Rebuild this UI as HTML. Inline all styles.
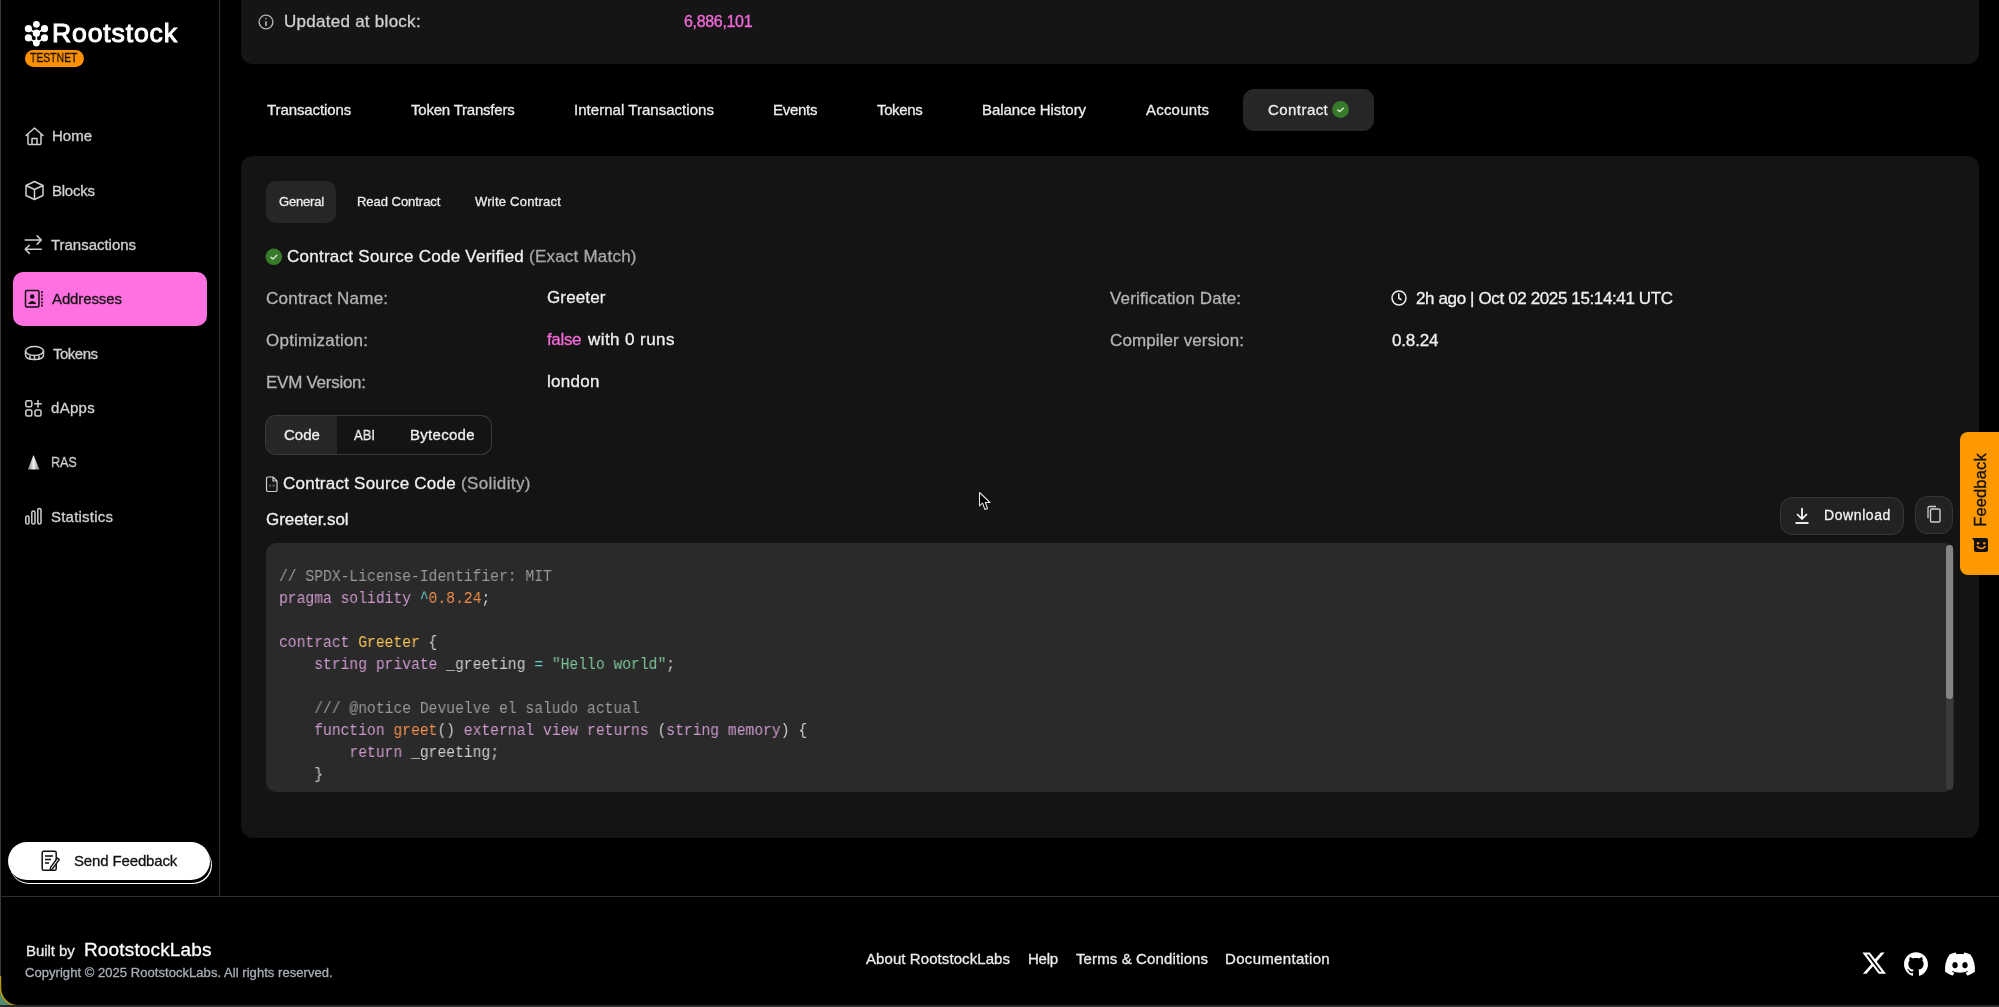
<!DOCTYPE html>
<html><head><meta charset="utf-8"><title>Rootstock Explorer</title>
<style>
html,body{margin:0;padding:0;}
body{width:1999px;height:1007px;overflow:hidden;position:relative;background:#000;font-family:"Liberation Sans",sans-serif;}
.t{position:absolute;white-space:pre;font-family:"Liberation Sans",sans-serif;-webkit-text-stroke:0.3px currentColor;will-change:transform;}
.r{position:absolute;}
.s{position:absolute;overflow:visible;}
pre.code{position:absolute;margin:0;will-change:transform;font-family:"Liberation Mono",monospace;color:#ccc;white-space:pre;}
</style></head><body>
<div class="r" style="left:0px;top:0px;width:1999px;height:1007px;background:#000;border-radius:0px;"></div>
<div class="r" style="left:0px;top:0px;width:1px;height:1007px;background:#3a3a3a;border-radius:0px;"></div>
<div class="r" style="left:219px;top:0px;width:1px;height:897px;background:#2e2e2e;border-radius:0px;"></div>
<div class="r" style="left:0px;top:896px;width:1999px;height:1px;background:#2e2e2e;border-radius:0px;"></div>
<div class="r" style="left:0px;top:1005px;width:1999px;height:2px;background:#2a2a2a;border-radius:0px;"></div>
<svg class="s" style="left:20px;top:16px;" width="32" height="34" viewBox="0 0 32 34"><line x1="8.399999999999999" y1="12.7" x2="16.4" y2="17.200000000000003" stroke="#fff" stroke-width="1.6"/><line x1="24.5" y1="12.7" x2="16.4" y2="17.200000000000003" stroke="#fff" stroke-width="1.6"/><line x1="8.399999999999999" y1="21.799999999999997" x2="16.4" y2="27" stroke="#fff" stroke-width="1.6"/><line x1="24.5" y1="21.799999999999997" x2="16.4" y2="27" stroke="#fff" stroke-width="1.6"/><line x1="16.4" y1="17.200000000000003" x2="16.4" y2="27" stroke="#fff" stroke-width="1.6"/><circle cx="16.4" cy="8.3" r="3.4" fill="#fff"/><circle cx="8.399999999999999" cy="12.7" r="3.6" fill="#fff"/><circle cx="24.5" cy="12.7" r="3.6" fill="#fff"/><circle cx="16.4" cy="17.200000000000003" r="3.6" fill="#fff"/><circle cx="8.399999999999999" cy="21.799999999999997" r="3.6" fill="#fff"/><circle cx="24.5" cy="21.799999999999997" r="3.6" fill="#fff"/><circle cx="16.4" cy="27" r="3.4" fill="#fff"/></svg>
<div class="t" style="left:52.30px;top:19.98px;font-size:26.6px;line-height:26.6px;color:#fff;letter-spacing:0.850px;-webkit-text-stroke:1px #fff;">Rootstock</div>
<div class="r" style="left:25px;top:50px;width:59px;height:17px;background:#ff9100;border-radius:9px;"></div>
<div class="t" style="left:30.30px;top:52.12px;font-size:12.5px;line-height:12.5px;color:#111;transform:scaleX(0.8313);transform-origin:0.00px 0;">TESTNET</div>
<div class="r" style="left:13px;top:272px;width:194px;height:54px;background:#ff70e0;border-radius:10px;"></div>
<svg class="s" style="left:24px;top:126px;" width="21" height="20" viewBox="0 0 21 20"><path d="M2 9.5 L10.5 2 L19 9.5 M4 8 V17.5 a1 1 0 0 0 1 1 H16 a1 1 0 0 0 1 -1 V8 M8 18.5 V12.5 H13 V18.5" fill="none" stroke="#cfcfcf" stroke-width="1.5" stroke-linecap="round" stroke-linejoin="round"/></svg>
<div class="t" style="left:52.20px;top:128.30px;font-size:15px;line-height:15px;color:#d2d2d2;">Home</div>
<svg class="s" style="left:24px;top:180px;" width="21" height="21" viewBox="0 0 21 21"><path d="M10.5 1.5 L19 5.5 V15.5 L10.5 19.5 L2 15.5 V5.5 Z M2 5.5 L10.5 9.5 L19 5.5 M10.5 9.5 V19.5" fill="none" stroke="#cfcfcf" stroke-width="1.5" stroke-linecap="round" stroke-linejoin="round"/></svg>
<div class="t" style="left:52.20px;top:182.70px;font-size:15px;line-height:15px;color:#d2d2d2;letter-spacing:-0.240px;">Blocks</div>
<svg class="s" style="left:24px;top:234px;" width="20" height="21" viewBox="0 0 20 21"><path d="M1.2 6 H17.3 M13.2 1.9 L17.3 6 L13.2 10.1 M17.3 15.3 H1.2 M5.3 11.2 L1.2 15.3 L5.3 19.4" fill="none" stroke="#cfcfcf" stroke-width="1.5" stroke-linecap="round" stroke-linejoin="round"/></svg>
<div class="t" style="left:50.70px;top:237.10px;font-size:15px;line-height:15px;color:#d2d2d2;letter-spacing:-0.027px;">Transactions</div>
<svg class="s" style="left:24px;top:289px;" width="20" height="20" viewBox="0 0 20 20"><rect x="1.5" y="1.5" width="13.5" height="16.5" rx="1.5" fill="none" stroke="#111" stroke-width="1.5"/><circle cx="8.2" cy="7.5" r="2.2" fill="#111"/><path d="M4.5 14.5 Q8.2 10.5 12 14.5 Z" fill="#111" stroke="#111" stroke-width="1"/><path d="M18 2 V18" stroke="#111" stroke-width="1.5" stroke-dasharray="2.2 1.2"/></svg>
<div class="t" style="left:52.00px;top:291.00px;font-size:15px;line-height:15px;color:#151515;letter-spacing:-0.113px;">Addresses</div>
<svg class="s" style="left:24px;top:345px;" width="21" height="17" viewBox="0 0 21 17"><ellipse cx="10.5" cy="6" rx="9" ry="4.5" fill="none" stroke="#cfcfcf" stroke-width="1.5" stroke-linecap="round" stroke-linejoin="round"/><path d="M1.5 6 V10 Q1.5 14.5 10.5 14.5 Q19.5 14.5 19.5 10 V6" fill="none" stroke="#cfcfcf" stroke-width="1.5" stroke-linecap="round" stroke-linejoin="round"/><path d="M6 14 V11 M10.5 14.5 V11.5 M15 14 V11" fill="none" stroke="#cfcfcf" stroke-width="1.5" stroke-linecap="round" stroke-linejoin="round" stroke-width="1.2"/></svg>
<div class="t" style="left:53.30px;top:345.70px;font-size:15px;line-height:15px;color:#d2d2d2;letter-spacing:-0.500px;">Tokens</div>
<svg class="s" style="left:24px;top:399px;" width="19" height="19" viewBox="0 0 19 19"><rect x="1.8" y="1.8" width="6" height="6" rx="1.5" fill="none" stroke="#cfcfcf" stroke-width="1.5" stroke-linecap="round" stroke-linejoin="round"/><rect x="1.8" y="11" width="6" height="6" rx="1.5" fill="none" stroke="#cfcfcf" stroke-width="1.5" stroke-linecap="round" stroke-linejoin="round"/><rect x="11" y="11" width="6" height="6" rx="1.5" fill="none" stroke="#cfcfcf" stroke-width="1.5" stroke-linecap="round" stroke-linejoin="round"/><path d="M14 1.5 V8 M10.8 4.8 H17.2" fill="none" stroke="#cfcfcf" stroke-width="1.5" stroke-linecap="round" stroke-linejoin="round"/></svg>
<div class="t" style="left:50.70px;top:399.70px;font-size:15px;line-height:15px;color:#d2d2d2;letter-spacing:0.300px;">dApps</div>
<svg class="s" style="left:27px;top:454px;" width="14" height="17" viewBox="0 0 14 17"><defs><linearGradient id="ras" x1="0" y1="0" x2="1" y2="0"><stop offset="0" stop-color="#777"/><stop offset="0.5" stop-color="#f4f4f4"/><stop offset="1" stop-color="#777"/></linearGradient></defs><path d="M6.5 1 L12.5 15.5 H0.8 Z" fill="url(#ras)"/></svg>
<div class="t" style="left:50.70px;top:454.30px;font-size:15px;line-height:15px;color:#d2d2d2;transform:scaleX(0.8377);transform-origin:0.00px 0;">RAS</div>
<svg class="s" style="left:24px;top:507px;" width="19" height="19" viewBox="0 0 19 19"><rect x="1.8" y="9" width="3.2" height="8" rx="1.6" fill="none" stroke="#cfcfcf" stroke-width="1.5" stroke-linecap="round" stroke-linejoin="round"/><rect x="7.8" y="4" width="3.2" height="13" rx="1.6" fill="none" stroke="#cfcfcf" stroke-width="1.5" stroke-linecap="round" stroke-linejoin="round"/><rect x="13.8" y="1.5" width="3.2" height="15.5" rx="1.6" fill="none" stroke="#cfcfcf" stroke-width="1.5" stroke-linecap="round" stroke-linejoin="round"/></svg>
<div class="t" style="left:50.70px;top:508.90px;font-size:15px;line-height:15px;color:#d2d2d2;letter-spacing:0.222px;">Statistics</div>
<div class="r" style="left:10px;top:846px;width:202px;height:38px;background:#fff;border-radius:19px;"></div>
<div class="r" style="left:10px;top:845px;width:201px;height:38px;background:#000;border-radius:19px;"></div>
<div class="r" style="left:8px;top:842px;width:202px;height:38px;background:#fff;border-radius:19px;"></div>
<svg class="s" style="left:41px;top:850px;" width="19" height="22" viewBox="0 0 19 22"><rect x="1.2" y="1.2" width="14" height="19" rx="1.5" fill="none" stroke="#111" stroke-width="1.5"/><path d="M4 6 H12 M4 9.5 H10 M4 13 H8" stroke="#111" stroke-width="1.6"/><path d="M9.5 17.5 L16.5 8 L18.3 9.5 L11.3 19 L9.2 19.6 Z" fill="#fff" stroke="#111" stroke-width="1.3" stroke-linejoin="round"/></svg>
<div class="t" style="left:74.30px;top:853.10px;font-size:15px;line-height:15px;color:#111;letter-spacing:-0.142px;">Send Feedback</div>
<div class="r" style="left:241px;top:-20px;width:1738px;height:84px;background:#151515;border-radius:12px;"></div>
<svg class="s" style="left:258px;top:14px;" width="17" height="17" viewBox="0 0 17 17"><circle cx="8" cy="8" r="6.9" fill="none" stroke="#b4b4b4" stroke-width="1.4"/><path d="M8 7.2 V12" stroke="#b4b4b4" stroke-width="1.6"/><circle cx="8" cy="4.7" r="0.9" fill="#8a8a8a"/></svg>
<div class="t" style="left:283.80px;top:13.41px;font-size:17px;line-height:17px;color:#d0d0d0;letter-spacing:0.269px;">Updated at block:</div>
<div class="t" style="left:684.00px;top:14.25px;font-size:16px;line-height:16px;color:#f36ad9;letter-spacing:-0.325px;">6,886,101</div>
<div class="r" style="left:1243px;top:89px;width:131px;height:42px;background:#262626;border-radius:11px;"></div>
<div class="t" style="left:266.80px;top:101.80px;font-size:15px;line-height:15px;color:#ececec;letter-spacing:-0.091px;">Transactions</div>
<div class="t" style="left:411.00px;top:101.80px;font-size:15px;line-height:15px;color:#ececec;letter-spacing:-0.214px;">Token Transfers</div>
<div class="t" style="left:573.70px;top:101.80px;font-size:15px;line-height:15px;color:#ececec;letter-spacing:0.035px;">Internal Transactions</div>
<div class="t" style="left:772.50px;top:101.80px;font-size:15px;line-height:15px;color:#ececec;letter-spacing:-0.280px;">Events</div>
<div class="t" style="left:876.50px;top:101.80px;font-size:15px;line-height:15px;color:#ececec;letter-spacing:-0.360px;">Tokens</div>
<div class="t" style="left:981.70px;top:101.80px;font-size:15px;line-height:15px;color:#ececec;letter-spacing:-0.071px;">Balance History</div>
<div class="t" style="left:1145.50px;top:101.80px;font-size:15px;line-height:15px;color:#ececec;letter-spacing:0.200px;">Accounts</div>
<div class="t" style="left:1268.00px;top:101.80px;font-size:15px;line-height:15px;color:#ececec;letter-spacing:0.443px;">Contract</div>
<svg class="s" style="left:1331px;top:100.1px;" width="19" height="19" viewBox="0 0 19 19"><circle cx="9.5" cy="9.5" r="8.4" fill="#377a2a"/><path d="M6.6 10 L8.7 11.6 L12.6 8.1" fill="none" stroke="#dfeed8" stroke-width="1.3" stroke-linecap="round" stroke-linejoin="round"/></svg>
<div class="r" style="left:241px;top:156px;width:1738px;height:682px;background:#141414;border-radius:12px;"></div>
<div class="r" style="left:266px;top:181px;width:70px;height:42px;background:#262626;border-radius:10px;"></div>
<div class="t" style="left:278.50px;top:195.19px;font-size:13px;line-height:13px;color:#ececec;letter-spacing:-0.200px;">General</div>
<div class="t" style="left:356.80px;top:195.39px;font-size:13px;line-height:13px;color:#ececec;letter-spacing:-0.033px;">Read Contract</div>
<div class="t" style="left:474.50px;top:195.39px;font-size:13px;line-height:13px;color:#ececec;letter-spacing:0.231px;">Write Contract</div>
<svg class="s" style="left:265px;top:247.6px;" width="18" height="18" viewBox="0 0 18 18"><circle cx="8.8" cy="8.8" r="8.3" fill="#377a2a"/><path d="M5.9 9.2 L8 10.9 L11.8 7.3" fill="none" stroke="#dfeed8" stroke-width="1.35" stroke-linecap="round" stroke-linejoin="round"/></svg>
<div class="t" style="left:287.20px;top:248.21px;font-size:17px;line-height:17px;color:#f0f0f0;letter-spacing:0.257px;">Contract Source Code Verified</div>
<div class="t" style="left:528.50px;top:248.21px;font-size:17px;line-height:17px;color:#a8a8a8;letter-spacing:0.217px;">(Exact Match)</div>
<div class="t" style="left:266.00px;top:289.61px;font-size:17px;line-height:17px;color:#b4b4b4;letter-spacing:0.231px;">Contract Name:</div>
<div class="t" style="left:547.40px;top:289.41px;font-size:17px;line-height:17px;color:#f0f0f0;letter-spacing:0.133px;">Greeter</div>
<div class="t" style="left:266.00px;top:331.61px;font-size:17px;line-height:17px;color:#b4b4b4;letter-spacing:0.233px;">Optimization:</div>
<div class="t" style="left:547.40px;top:331.41px;font-size:17px;line-height:17px;color:#f36ad9;letter-spacing:-0.350px;">false</div>
<div class="t" style="left:587.60px;top:331.41px;font-size:17px;line-height:17px;color:#f0f0f0;letter-spacing:0.420px;">with 0 runs</div>
<div class="t" style="left:266.00px;top:373.61px;font-size:17px;line-height:17px;color:#b4b4b4;letter-spacing:-0.273px;">EVM Version:</div>
<div class="t" style="left:547.40px;top:372.81px;font-size:17px;line-height:17px;color:#f0f0f0;letter-spacing:0.300px;">london</div>
<div class="t" style="left:1110.00px;top:289.61px;font-size:17px;line-height:17px;color:#b4b4b4;letter-spacing:0.147px;">Verification Date:</div>
<svg class="s" style="left:1390px;top:289px;" width="18" height="18" viewBox="0 0 18 18"><circle cx="9" cy="9" r="7" fill="none" stroke="#eee" stroke-width="1.5"/><path d="M8.8 5 V9.2 L11 10.5" fill="none" stroke="#eee" stroke-width="1.5" stroke-linecap="round"/></svg>
<div class="t" style="left:1416.00px;top:289.61px;font-size:17px;line-height:17px;color:#f0f0f0;letter-spacing:-0.375px;">2h ago | Oct 02 2025 15:14:41 UTC</div>
<div class="t" style="left:1110.00px;top:331.61px;font-size:17px;line-height:17px;color:#b4b4b4;letter-spacing:0.106px;">Compiler version:</div>
<div class="t" style="left:1391.50px;top:331.61px;font-size:17px;line-height:17px;color:#f0f0f0;letter-spacing:-0.160px;">0.8.24</div>
<div class="r" style="left:265px;top:415px;width:227px;height:40px;background:#3a3a3a;border-radius:11px;"></div>
<div class="r" style="left:266px;top:416px;width:225px;height:38px;background:#141414;border-radius:10px;"></div>
<div class="r" style="left:266px;top:416px;width:71px;height:38px;background:#272727;border-radius:10px;border-top-right-radius:0;border-bottom-right-radius:0;"></div>
<div class="t" style="left:283.80px;top:426.70px;font-size:15px;line-height:15px;color:#f0f0f0;letter-spacing:0.033px;">Code</div>
<div class="t" style="left:354.20px;top:426.70px;font-size:15px;line-height:15px;color:#f0f0f0;transform:scaleX(0.8678);transform-origin:0.00px 0;">ABI</div>
<div class="t" style="left:409.50px;top:426.70px;font-size:15px;line-height:15px;color:#f0f0f0;letter-spacing:0.286px;">Bytecode</div>
<svg class="s" style="left:265px;top:476px;" width="14" height="17" viewBox="0 0 14 17"><path d="M1.5 2.5 a1.5 1.5 0 0 1 1.5 -1.5 H8 L12 5 V14 a1.5 1.5 0 0 1 -1.5 1.5 H3 a1.5 1.5 0 0 1 -1.5 -1.5 Z M8 1 V5 H12" fill="none" stroke="#cfcfcf" stroke-width="1.2" stroke-linejoin="round"/><path d="M5.6 8.6 L4.6 9.6 L5.6 10.6 M8 8.6 L9 9.6 L8 10.6" fill="none" stroke="#cfcfcf" stroke-width="0.9"/></svg>
<div class="t" style="left:283.10px;top:475.21px;font-size:17px;line-height:17px;color:#f0f0f0;letter-spacing:0.232px;">Contract Source Code</div>
<div class="t" style="left:460.60px;top:475.21px;font-size:17px;line-height:17px;color:#a8a8a8;letter-spacing:0.367px;">(Solidity)</div>
<div class="t" style="left:266.30px;top:510.91px;font-size:17px;line-height:17px;color:#f0f0f0;letter-spacing:-0.050px;">Greeter.sol</div>
<div class="r" style="left:1780px;top:497px;width:124px;height:38px;background:#363636;border-radius:13px;"></div>
<div class="r" style="left:1781px;top:498px;width:122px;height:36px;background:#222222;border-radius:12px;"></div>
<svg class="s" style="left:1794px;top:507px;" width="17" height="18" viewBox="0 0 17 18"><path d="M8 1.5 V12 M3.5 7.5 L8 12 L12.5 7.5" fill="none" stroke="#fff" stroke-width="1.7" stroke-linecap="round" stroke-linejoin="round"/><path d="M1.5 16 H14.5" stroke="#fff" stroke-width="1.8"/></svg>
<div class="t" style="left:1823.60px;top:508.15px;font-size:14px;line-height:14px;color:#f2f2f2;letter-spacing:0.586px;">Download</div>
<div class="r" style="left:1915px;top:496px;width:38px;height:38px;background:#363636;border-radius:13px;"></div>
<div class="r" style="left:1916px;top:497px;width:36px;height:36px;background:#222222;border-radius:12px;"></div>
<svg class="s" style="left:1926px;top:505px;" width="17" height="19" viewBox="0 0 17 19"><path d="M2 13 V3 a1.5 1.5 0 0 1 1.5 -1.5 H10" fill="none" stroke="#cfcfcf" stroke-width="1.3"/><rect x="4.5" y="4" width="9.5" height="13" rx="1.3" fill="none" stroke="#cfcfcf" stroke-width="1.4"/></svg>
<div class="r" style="left:266px;top:543px;width:1688px;height:249px;background:#2a2a2a;border-radius:10px;"></div>
<div class="r" style="left:1946px;top:545px;width:7px;height:245px;background:#3a3a3a;border-radius:3px;"></div>
<div class="r" style="left:1946px;top:545px;width:7px;height:154px;background:#858585;border-radius:3.5px;"></div>
<div class="r" style="left:266px;top:543px;width:1680px;height:248px;overflow:hidden;border-radius:10px;"><pre class="code" style="left:12.900000000000011px;top:22.85px;font-size:15.6px;line-height:22px;transform:scaleX(0.9404);transform-origin:0 0;"><span style="color:#999">// SPDX-License-Identifier: MIT</span>
<span style="color:#cc99cd">pragma</span> <span style="color:#cc99cd">solidity</span> <span style="color:#67cdcc">^</span><span style="color:#f08d49">0.8.24</span><span style="color:#ccc">;</span>

<span style="color:#cc99cd">contract</span> <span style="color:#f8c555">Greeter</span> <span style="color:#ccc">{</span>
    <span style="color:#cc99cd">string</span> <span style="color:#cc99cd">private</span> <span style="color:#ccc">_greeting</span> <span style="color:#67cdcc">=</span> <span style="color:#7ec699">"Hello world"</span><span style="color:#ccc">;</span>

    <span style="color:#999">/// @notice Devuelve el saludo actual</span>
    <span style="color:#cc99cd">function</span> <span style="color:#f08d49">greet</span><span style="color:#ccc">()</span> <span style="color:#cc99cd">external</span> <span style="color:#cc99cd">view</span> <span style="color:#cc99cd">returns</span> <span style="color:#ccc">(</span><span style="color:#cc99cd">string</span> <span style="color:#cc99cd">memory</span><span style="color:#ccc">)</span> <span style="color:#ccc">{</span>
        <span style="color:#cc99cd">return</span> <span style="color:#ccc">_greeting</span><span style="color:#ccc">;</span>
    <span style="color:#ccc">}</span></pre></div>
<div class="r" style="left:1960px;top:432px;width:50px;height:143px;background:#ff9900;border-radius:8px;"></div>
<div class="t" style="left:1980px;top:489.5px;width:0;height:0;"><div style="position:absolute;left:-40px;top:-9px;width:80px;height:18px;line-height:18px;font-size:16.5px;color:#111;text-align:center;transform:rotate(-90deg);letter-spacing:0.15px;">Feedback</div></div>
<svg class="s" style="left:1971px;top:537px;" width="18" height="17" viewBox="0 0 18 17"><path d="M1 1 H15 a2 2 0 0 1 2 2 V13 a2 2 0 0 1 -2 2 H5 a2 2 0 0 1 -2 -2 V4 Z" fill="#111"/><circle cx="7.1" cy="6.3" r="1.2" fill="#ff9100"/><circle cx="13.3" cy="6.3" r="1.2" fill="#ff9100"/><path d="M6.3 9.6 Q10.2 13.4 14.1 9.6" fill="none" stroke="#ff9100" stroke-width="1.5" stroke-linecap="round"/></svg>
<div class="t" style="left:25.70px;top:942.50px;font-size:15px;line-height:15px;color:#e8e8e8;letter-spacing:-0.071px;">Built by</div>
<div class="t" style="left:84.30px;top:940.21px;font-size:19px;line-height:19px;color:#ffffff;letter-spacing:0.150px;">RootstockLabs</div>
<div class="t" style="left:25.20px;top:965.59px;font-size:13px;line-height:13px;color:#a9aeb8;letter-spacing:0.049px;">Copyright © 2025 RootstockLabs. All rights reserved.</div>
<div class="t" style="left:866.00px;top:950.60px;font-size:15px;line-height:15px;color:#ececec;letter-spacing:0.078px;">About RootstockLabs</div>
<div class="t" style="left:1027.80px;top:950.60px;font-size:15px;line-height:15px;color:#ececec;letter-spacing:-0.233px;">Help</div>
<div class="t" style="left:1075.60px;top:950.60px;font-size:15px;line-height:15px;color:#ececec;letter-spacing:0.118px;">Terms &amp; Conditions</div>
<div class="t" style="left:1225.00px;top:950.60px;font-size:15px;line-height:15px;color:#ececec;letter-spacing:0.317px;">Documentation</div>
<svg class="s" style="left:1860.9px;top:950.2px;" width="26.3" height="26.3" viewBox="0 0 24 24"><path fill="#fff" d="M18.244 2.25h3.308l-7.227 8.26 8.502 11.24H16.17l-5.214-6.817L4.99 21.75H1.68l7.73-8.835L1.254 2.25H8.08l4.713 6.231zm-1.161 17.52h1.833L7.084 4.126H5.117z"/></svg>
<svg class="s" style="left:1904px;top:952px;" width="24" height="24" viewBox="0 0 24 24"><path fill="#fff" d="M12 .297c-6.63 0-12 5.373-12 12 0 5.303 3.438 9.8 8.205 11.385.6.113.82-.258.82-.577 0-.285-.01-1.04-.015-2.04-3.338.724-4.042-1.61-4.042-1.61C4.422 18.07 3.633 17.7 3.633 17.7c-1.087-.744.084-.729.084-.729 1.205.084 1.838 1.236 1.838 1.236 1.07 1.835 2.809 1.305 3.495.998.108-.776.417-1.305.76-1.605-2.665-.3-5.466-1.332-5.466-5.93 0-1.310.465-2.380 1.235-3.220-.135-.303-.54-1.523.105-3.176 0 0 1.005-.322 3.300 1.230.96-.267 1.98-.399 3-.405 1.020.006 2.040.138 3 .405 2.280-1.552 3.285-1.230 3.285-1.230.645 1.653.24 2.873.12 3.176.765.840 1.230 1.910 1.230 3.220 0 4.610-2.805 5.625-5.475 5.920.42.36.81 1.096.81 2.220 0 1.606-.015 2.896-.015 3.286 0 .315.21.69.825.57C20.565 22.092 24 17.592 24 12.297c0-6.627-5.373-12-12-12"/></svg>
<svg class="s" style="left:1945px;top:949.1px;" width="30" height="30" viewBox="0 0 24 24"><path fill="#fff" d="M20.317 4.3698a19.7913 19.7913 0 00-4.8851-1.5152.0741.0741 0 00-.0785.0371c-.211.3753-.4447.8648-.6083 1.2495-1.8447-.2762-3.68-.2762-5.4868 0-.1636-.3933-.4058-.8742-.6177-1.2495a.077.077 0 00-.0785-.037 19.7363 19.7363 0 00-4.8852 1.515.0699.0699 0 00-.0321.0277C.5334 9.0458-.319 13.5799.0992 18.0578a.0824.0824 0 00.0312.0561c2.0528 1.5076 4.0413 2.4228 5.9929 3.0294a.0777.0777 0 00.0842-.0276c.4616-.6304.8731-1.2952 1.226-1.9942a.076.076 0 00-.0416-.1057c-.6528-.2476-1.2743-.5495-1.8722-.8923a.077.077 0 01-.0076-.1277c.1258-.0943.2517-.1923.3718-.2914a.0743.0743 0 01.0776-.0105c3.9278 1.7933 8.18 1.7933 12.0614 0a.0739.0739 0 01.0785.0095c.1202.099.246.1981.3728.2924a.077.077 0 01-.0066.1276 12.2986 12.2986 0 01-1.873.8914.0766.0766 0 00-.0407.1067c.3604.698.7719 1.3628 1.225 1.9932a.076.076 0 00.0842.0286c1.961-.6067 3.9495-1.5219 6.0023-3.0294a.077.077 0 00.0313-.0552c.5004-5.177-.8382-9.6739-3.5485-13.6604a.061.061 0 00-.0312-.0286zM8.02 15.3312c-1.1825 0-2.1569-1.0857-2.1569-2.419 0-1.3332.9555-2.4189 2.157-2.4189 1.2108 0 2.1757 1.0952 2.1568 2.419 0 1.3332-.9555 2.4189-2.1569 2.4189zm7.9748 0c-1.1825 0-2.1569-1.0857-2.1569-2.419 0-1.3332.9554-2.4189 2.1569-2.4189 1.2108 0 2.1757 1.0952 2.1568 2.419 0 1.3332-.946 2.4189-2.1568 2.4189Z"/></svg>
<svg class="s" style="left:975px;top:489px;" width="20" height="25" viewBox="0 0 20 25"><path d="M4.5 3.5 V17 L7.5 14 L10 20.5 L12.5 19.5 L10.3 13.5 H15 Z" fill="#000" stroke="#e6e6e6" stroke-width="1.05" stroke-linejoin="round"/></svg>
<svg class="s" style="left:0px;top:976px;" width="30" height="31" viewBox="0 0 30 31"><path d="M0 0 H1.2 V12 A17 17 0 0 0 18 29 H30 V31 H0 Z" fill="#b89a10"/><path d="M0 14 A16 16 0 0 0 12 29 H0 Z" fill="#3d8a80" opacity="0.85"/><path d="M0 29 H30 V31 H0Z" fill="#2a2a2a"/></svg>
</body></html>
